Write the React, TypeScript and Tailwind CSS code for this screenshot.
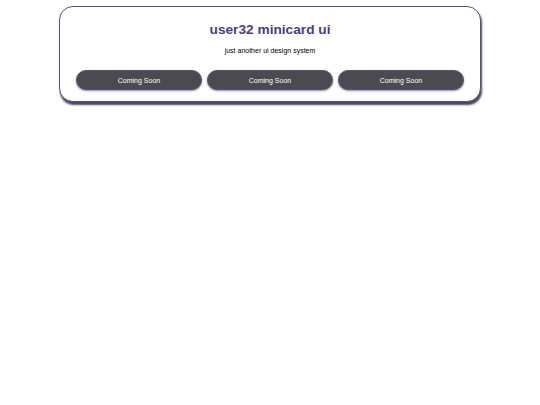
const buttons = ['Coming Soon', 'Coming Soon', 'Coming Soon']

export default function App() {
	return (
		<div className="min-h-screen bg-white pt-[6px] font-['Liberation_Sans',Arial,sans-serif]">
			<div className="mx-auto w-[422px] rounded-[14px] border border-[#5a4f8a] bg-white px-[16px] pt-[13px] pb-[11px] shadow-[1px_3px_2px_rgba(40,36,60,0.85)]">
				<h1 className="text-center text-[13.7px] leading-[20px] font-bold text-[#4a3d86]">
					user32 minicard ui
				</h1>
				<p className="mt-[6px] text-center text-[7px] leading-[10px] text-black">
					just another ui design system
				</p>
				<div className="mt-[14px] grid grid-cols-3 gap-[5px]">
					{buttons.map((label, i) => (
						<button
							key={i}
							className="h-[20px] rounded-full border border-[#5b5470] bg-[#4b4a50] text-[7px] leading-none text-white shadow-[0_1px_2px_rgba(60,50,110,0.6)]">
							{label}
						</button>
					))}
				</div>
			</div>
		</div>
	)
}
